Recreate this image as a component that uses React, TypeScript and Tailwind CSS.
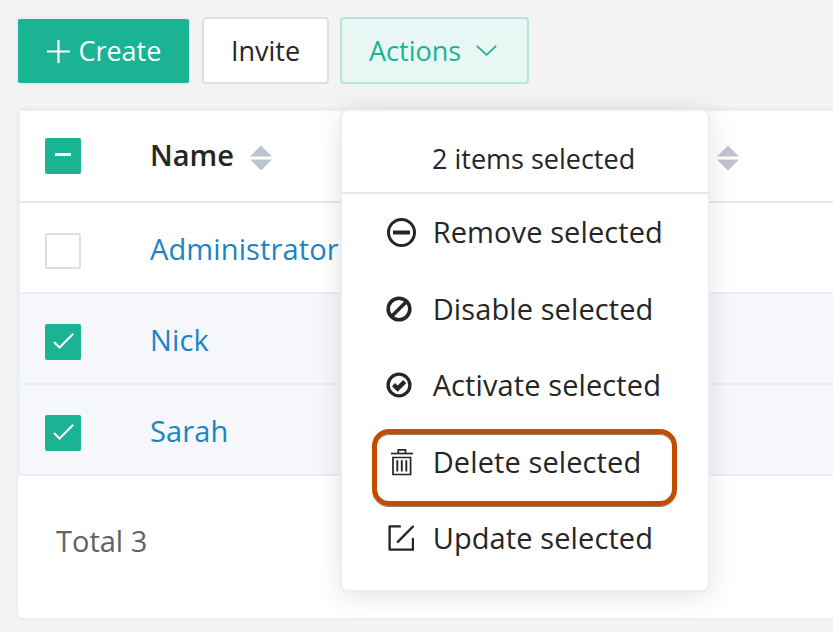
import type { ReactNode } from "react";

function SortIcon() {
  return (
    <svg width="22" height="26" viewBox="0 0 22 26" fill="#bec3cd">
      <path d="M11 0.5 22 11.5H0z" />
      <path d="M0 14.5h22L11 25.5z" />
    </svg>
  );
}

function CheckBox({ state }: { state: "none" | "some" | "all" }) {
  if (state === "none") {
    return <span className="h-9 w-9 rounded-[2px] border-2 border-[#dcdfe6] bg-white" />;
  }
  return (
    <span className="flex h-9 w-9 rounded-[2px] bg-[#1ab394]">
      <svg width="36" height="36" viewBox="0 0 36 36" fill="none" stroke="#fff">
        {state === "some" ? (
          <path d="M10 16.5h16" strokeWidth="3" />
        ) : (
          <path d="M9 18 14.5 23.5 28.2 9.7" strokeWidth="2" />
        )}
      </svg>
    </span>
  );
}

function Row({ name, checked }: { name: string; checked: boolean }) {
  return (
    <div
      className={
        "flex h-[91px] items-center border-b-2 border-[#ebeef5] pl-[25px] " +
        (checked ? "bg-[#f5f7fb]" : "bg-white")
      }
    >
      <span className="flex w-[105px] pt-[6px]">
        <CheckBox state={checked ? "all" : "none"} />
      </span>
      <a className="pt-[2px] text-[29px] leading-[40px] tracking-[0.12px] text-[#1c84c6]">{name}</a>
    </div>
  );
}

function MenuItem({ icon, label }: { icon: ReactNode; label: string }) {
  return (
    <li className="flex h-[76.5px] items-center pl-[44px]">
      <span className="flex w-[46.7px]">{icon}</span>
      <span className="text-[29px] leading-[40px] tracking-[0.1px] whitespace-nowrap">{label}</span>
    </li>
  );
}

const items = [
  {
    label: "Remove selected",
    icon: (
      <svg className="ml-[1px]" width="29" height="29" viewBox="0 0 29 29" fill="none" stroke="#262626">
        <circle cx="14.5" cy="14.5" r="13" strokeWidth="3" />
        <path d="M6 14.5h17" strokeWidth="4" />
      </svg>
    ),
  },
  {
    label: "Disable selected",
    icon: (
      <svg className="mt-[1px]" width="26" height="26" viewBox="0 0 26 26" fill="none" stroke="#262626" strokeWidth="3.6">
        <circle cx="13" cy="13" r="10.8" />
        <path d="M5.5 20.5 20.5 5.5" />
      </svg>
    ),
  },
  {
    label: "Activate selected",
    icon: (
      <svg width="26" height="26" viewBox="0 0 26 26" fill="none" stroke="#262626">
        <circle cx="13" cy="13" r="10.9" strokeWidth="3.3" />
        <path d="M7.5 12.7 11.6 16.6 18.7 9.6" strokeWidth="4.4" />
      </svg>
    ),
  },
  {
    label: "Delete selected",
    icon: (
      <svg className="mt-[1px] ml-[4.5px]" width="22" height="28" viewBox="0 0 22 28" fill="none" stroke="#262626">
        <path d="M0 5.5h22" strokeWidth="1.7" />
        <path d="M7.3 5.5V1.8h7.2V5.5" strokeWidth="1.7" />
        <path d="M2 9.5h17.6v17H2z" strokeWidth="1.7" />
        <path d="M6.3 12.2v11.3M10.8 12.2v11.3M15.3 12.2v11.3" strokeWidth="1.9" />
      </svg>
    ),
  },
  {
    label: "Update selected",
    icon: (
      <svg className="ml-[2px]" width="26" height="26" viewBox="0 0 26 26" fill="none" stroke="#262626" strokeWidth="2.4" strokeLinecap="round" strokeLinejoin="round">
        <path d="M11.8 1.4H1.6V24.6H25V14" />
        <path d="M9.8 16.8 25 1.5" />
      </svg>
    ),
  },
];

export default function App() {
  return (
    <div className="relative h-[632px] w-[833px] overflow-hidden bg-[#f3f3f3] pt-[17px] pl-4 font-['Open_Sans',sans-serif] text-[#262626]">
      <div className="flex h-[67px] text-[27px] leading-[38px]">
        <button className="mt-[2px] ml-[2px] flex h-16 w-[171px] items-center rounded-[2px] bg-[#1ab394] pl-[29px] text-white shadow-[0_0_0_2px_#ebedf2]">
          <svg width="23" height="23" viewBox="0 0 23 23" stroke="#fff" strokeWidth="2.2" fill="none">
            <path d="M11.5 0v23M0 11.5h23" />
          </svg>
          <span className="ml-[8.4px]">Create</span>
        </button>
        <button className="ml-[13px] h-[67px] w-[127px] rounded-[4px] border-2 border-[#dcdfe6] bg-white pt-[1px]">
          Invite
        </button>
        <button className="ml-[11px] flex h-[67px] w-[189px] items-center rounded-[4px] border-2 border-[#b5e6dc] bg-[#e8f7f4] pl-[27px] text-[#1ab394]">
          <span className="pt-[1px]">Actions</span>
          <svg className="mr-[30px] ml-auto" width="21" height="11" viewBox="0 0 21 11" fill="none" stroke="#1ab394" strokeWidth="1.8">
            <path d="M0.8 0.8 10.5 9.8 20.2 0.8" />
          </svg>
        </button>
      </div>

      <main className="mt-[23px] h-[513px] w-[840px] rounded-[8px] border-2 border-[#ebeef5] bg-white">
        <div className="border-t-2 border-l-2 border-[#ebeef5]">
          <div className="flex h-[92px] items-center border-b-2 border-[#e6e6e6] pl-[25px]">
            <span className="w-[105px]">
              <CheckBox state="some" />
            </span>
            <span className="w-[100px] pb-[2px] text-[29px] leading-[40px] font-semibold">Name</span>
            <span className="pt-[4px]">
              <SortIcon />
            </span>
            <span className="ml-[445px] pt-[4px]">
              <SortIcon />
            </span>
          </div>
          <Row name="Administrator" checked={false} />
          <Row name="Nick" checked />
          <Row name="Sarah" checked />
        </div>
        <div className="pt-[45px] pl-[38px] text-[29px] leading-[40px] text-[#606266]">Total 3</div>
      </main>

      <div className="absolute top-[109px] left-[340px] h-[483px] w-[370px] rounded-[8px] border-2 border-[#ebeef5] bg-white shadow-[0_4px_28px_rgba(0,0,0,0.11)]">
        <div className="h-[83px] border-b-2 border-[#e4e7ed] pt-[29px] pl-[90px] text-[27px] leading-[38px] whitespace-nowrap">
          2 items selected
        </div>
        <ul>
          {items.map((item) => (
            <MenuItem key={item.label} icon={item.icon} label={item.label} />
          ))}
        </ul>
        <div className="absolute top-[318px] left-[30px] h-[77px] w-[305px] rounded-[17px] border-[5px] border-[#c24d00] shadow-[0_1px_0_#8f8378,inset_0_1px_0_#8f8378]" />
      </div>
    </div>
  );
}
